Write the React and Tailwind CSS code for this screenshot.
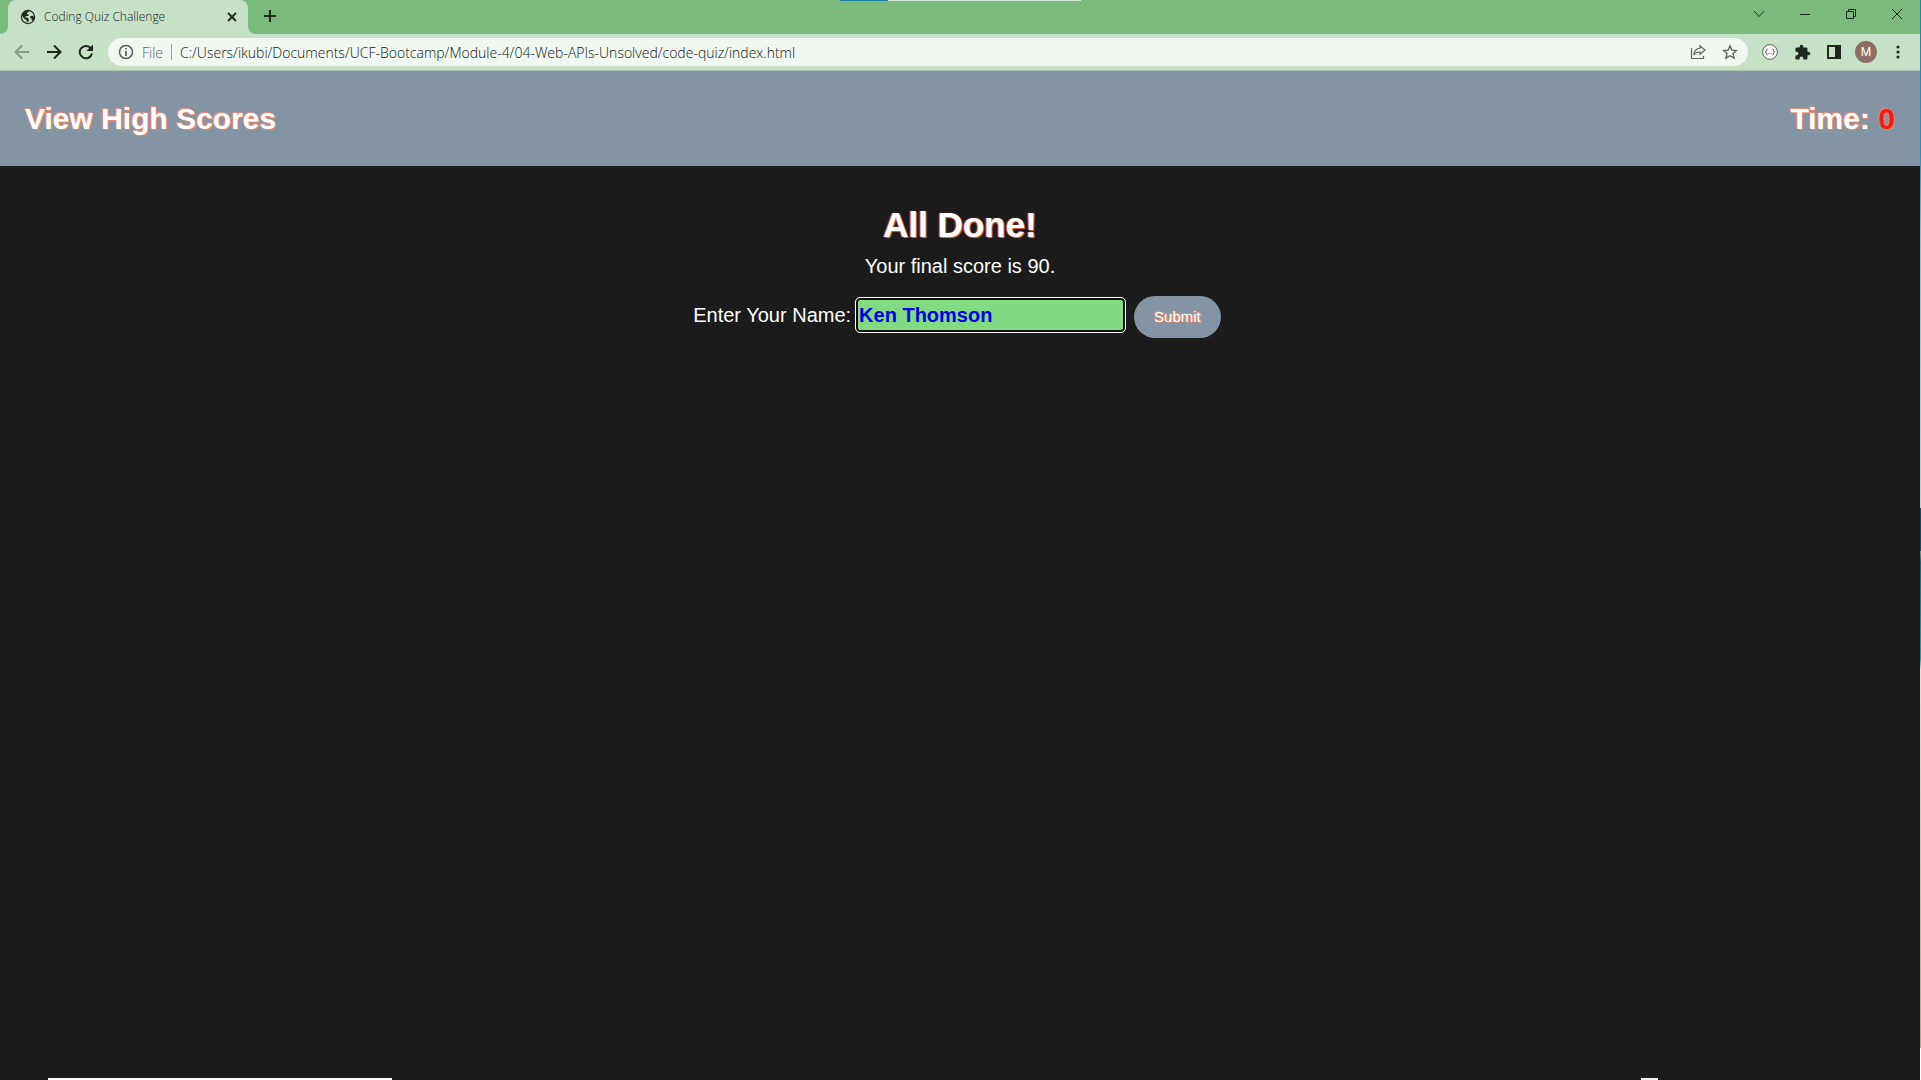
import React from "react";

const glow = "[text-shadow:-1px_-1px_1px_#f58a74,1px_1px_1px_#f08468]";
const heroGlow = "[text-shadow:-1px_0_1px_#f07058,1px_1px_1px_#e86a48]";

function Globe() {
  return (
    <svg viewBox="0 0 16 16" className="size-4 shrink-0" aria-hidden="true">
      <circle cx="8" cy="8" r="7.2" fill="#202a22" />
      <path d="M9.3 2.2 7 3.9l.2 1.3 1.5.6-.2 1.3H6.2L5 8.2l2.5.6 1.600 1.500-.6 1.600-1.700 1.900-.3-2.800L4 9.400 2 6.800 2.100 9.600C2.900 12 5 14 8 14c2 0 3.600-1 4.700-2.500l-1-.5-.3-1.800-1.500-.5.6-1.500 2-.6L14 8c0-2.800-2-5.200-4.700-5.800z" fill="#c5e1c6" />
    </svg>
  );
}

function IconButton({ label, className = "", children }) {
  return (
    <button type="button" aria-label={label} className={`flex size-8 shrink-0 items-center justify-center ${className}`}>
      {children}
    </button>
  );
}

function TabStrip() {
  return (
    <div className="relative flex h-[34px] shrink-0 bg-[#7abb7d] pl-2">
      <div className="absolute left-[840px] top-0 flex h-px w-[241px] bg-[#d4ecd5]">
        <div className="w-12 bg-[#2080a0]" />
      </div>
      <div className="relative flex w-60 items-center rounded-t-lg bg-[#c5e1c6] pl-3 pr-2">
        <svg viewBox="0 0 8 8" className="absolute -left-2 bottom-0 size-2" aria-hidden="true">
          <path d="M8 0v8H0a8 8 0 0 0 8-8z" fill="#c5e1c6" />
        </svg>
        <svg viewBox="0 0 8 8" className="absolute -right-2 bottom-0 size-2" aria-hidden="true">
          <path d="M0 0v8h8a8 8 0 0 1-8-8z" fill="#c5e1c6" />
        </svg>
        <Globe />
        <span className="ml-2 flex-1 whitespace-nowrap font-['Open_Sans','Noto_Sans',sans-serif] text-[12px] font-light text-[#1c241d]">Coding Quiz Challenge</span>
        <button type="button" aria-label="Close tab" className="flex size-4 items-center justify-center">
          <svg viewBox="0 0 16 16" className="size-4" fill="none" stroke="#202a22" strokeWidth="1.8" aria-hidden="true">
            <path d="M4 4l8 8M12 4l-8 8" />
          </svg>
        </button>
      </div>
      <IconButton label="New tab" className="ml-1.5">
        <svg viewBox="0 0 16 16" className="size-4" fill="none" stroke="#1c2a1e" strokeWidth="2" aria-hidden="true">
          <path d="M8 2v12M2 8h12" />
        </svg>
      </IconButton>
      <div className="ml-auto flex">
        <button type="button" aria-label="Search tabs" className="flex h-7 w-[46px] items-center justify-center">
          <svg viewBox="0 0 12 12" className="size-3" fill="none" stroke="#1c2a1e" aria-hidden="true"><path d="M1 3l5 5.500L11 3" /></svg>
        </button>
        <button type="button" aria-label="Minimize" className="flex h-7 w-[46px] items-center justify-center">
          <svg viewBox="0 0 10 10" className="size-2.5" stroke="#1c2a1e" aria-hidden="true"><path d="M0 5.500h10" /></svg>
        </button>
        <button type="button" aria-label="Restore" className="flex h-7 w-[46px] items-center justify-center">
          <svg viewBox="0 0 10 10" className="size-2.5" fill="none" stroke="#1c2a1e" aria-hidden="true"><path d="M.5 2.500h7v7h-7zM2.500 2.500v-2h7v7h-2" /></svg>
        </button>
        <button type="button" aria-label="Close window" className="flex h-7 w-[46px] items-center justify-center">
          <svg viewBox="0 0 10 10" className="size-2.5" fill="none" stroke="#1c2a1e" aria-hidden="true"><path d="M0 0l10 10M10 0L0 10" /></svg>
        </button>
      </div>
    </div>
  );
}

function Toolbar() {
  return (
    <div className="flex h-[37px] shrink-0 items-center border-b border-[#a9c3b0] bg-[#c5e1c6] pl-1.5 pr-1.5">
      <IconButton label="Back">
        <svg viewBox="0 0 16 16" className="size-4" fill="none" stroke="#829a86" strokeWidth="2" aria-hidden="true"><path d="M15 8H2M8 1.500L1.500 8 8 14.500" /></svg>
      </IconButton>
      <IconButton label="Forward">
        <svg viewBox="0 0 16 16" className="size-4" fill="none" stroke="#1d261f" strokeWidth="2" aria-hidden="true"><path d="M1 8h13M8 1.500L14.500 8 8 14.500" /></svg>
      </IconButton>
      <IconButton label="Reload">
        <svg viewBox="0 0 16 16" className="size-4" aria-hidden="true">
          <path d="M13 4.500A6.200 6.200 0 1 0 14 9.500" fill="none" stroke="#1d261f" strokeWidth="2" />
          <path d="M15 .5v6.500H8.500z" fill="#1d261f" />
        </svg>
      </IconButton>
      <div className="ml-1.5 flex h-7 flex-1 items-center rounded-full bg-[#f1f8f2] pl-2.5 pr-0.5 font-['Open_Sans','Noto_Sans',sans-serif] text-[14px] font-light">
        <svg viewBox="0 0 16 16" className="size-4 shrink-0" fill="none" stroke="#59625b" strokeWidth="1.500" aria-hidden="true">
          <circle cx="8" cy="8" r="6.500" />
          <path d="M8 7v5M8 4v1.600" strokeWidth="1.800" />
        </svg>
        <span className="ml-2 text-[#59625b]">File</span>
        <span className="ml-2 mr-2 h-4 w-px bg-[#98a29a]" />
        <input aria-label="Address" readOnly value="C:/Users/ikubi/Documents/UCF-Bootcamp/Module-4/04-Web-APIs-Unsolved/code-quiz/index.html" className="min-w-0 flex-1 bg-transparent text-[#101511] outline-none" />
        <IconButton label="Share">
          <svg viewBox="0 0 16 16" className="size-4" fill="none" stroke="#59625b" strokeWidth="1.200" aria-hidden="true">
            <path d="M1.500 4v10.500h12V12" />
            <path d="M10 1.800L15 6l-5 4.200V8C7 8 5.200 8.800 3.800 11 4.200 7 6.500 4.600 10 4.200z" />
          </svg>
        </IconButton>
        <IconButton label="Bookmark this page">
          <svg viewBox="0 0 16 16" className="size-4" fill="none" stroke="#59625b" strokeWidth="1.400" aria-hidden="true"><path d="M8 1.800l1.800 4.300 4.700.4-3.500 3.100 1 4.500-4-2.400-4 2.400 1-4.500-3.500-3.100 4.700-.4z" /></svg>
        </IconButton>
      </div>
      <IconButton label="JSON viewer extension" className="ml-1.5">
        <svg viewBox="0 0 16 16" className="size-4" fill="none" stroke="#5c615d" aria-hidden="true">
          <circle cx="8" cy="8" r="7.400" fill="#fafafa" />
          <path d="M5.500 5C4 5 5 8 3.500 8 5 8 4 11 5.500 11M10.500 5c1.500 0 .5 3 2 3-1.500 0-.5 3-2 3" stroke="#3c403d" />
          <path d="M6.500 9.500h1M8.500 9.500h1" />
        </svg>
      </IconButton>
      <IconButton label="Extensions">
        <svg viewBox="0 0 24 24" className="size-[17px]" fill="#1d261f" aria-hidden="true"><path d="M20.500 11H19V7c0-1.100-.9-2-2-2h-4V3.500a2.500 2.500 0 0 0-5 0V5H4c-1.100 0-2 .9-2 2v3.800h1.500a2.700 2.700 0 0 1 0 5.400H2V20c0 1.100.9 2 2 2h3.800v-1.500a2.700 2.700 0 0 1 5.400 0V22H17c1.100 0 2-.9 2-2v-4h1.500a2.500 2.500 0 0 0 0-5z" /></svg>
      </IconButton>
      <IconButton label="Side panel">
        <svg viewBox="0 0 16 16" className="size-4" aria-hidden="true"><path d="M2 2h8v12H2z" fill="none" stroke="#1d261f" strokeWidth="2" /><path d="M9 1h6v14H9z" fill="#1d261f" /></svg>
      </IconButton>
      <IconButton label="Profile">
        <span className="flex size-[22px] items-center justify-center rounded-full bg-[#8d6e63] font-[Roboto,sans-serif] text-[12px] text-white">M</span>
      </IconButton>
      <IconButton label="Menu">
        <svg viewBox="0 0 16 16" className="size-4" fill="#1d261f" aria-hidden="true"><circle cx="8" cy="3" r="1.600" /><circle cx="8" cy="8" r="1.600" /><circle cx="8" cy="13" r="1.600" /></svg>
      </IconButton>
    </div>
  );
}

export default function App() {
  return (
    <div className="relative flex min-h-screen flex-col bg-[#1b1b1b] pr-px font-['Liberation_Sans',Arial,sans-serif] text-white">
      <TabStrip />
      <Toolbar />
      <header className="flex h-[95px] items-center justify-between bg-[#8395a4] px-[25px] text-[30px] font-bold">
        <a href="#scores" className={glow}>View High Scores</a>
        <p className={glow}>Time: <span className="text-[#ee1c12]">0</span></p>
      </header>
      <main className="flex flex-col items-center pt-9 text-[20px]">
        <h1 className={`text-[35px] font-bold leading-[46px] ${heroGlow}`}>All Done!</h1>
        <p className="mt-1 leading-7">Your final score is 90.</p>
        <form className="mt-4 flex items-baseline pr-1.5" onSubmit={(e) => e.preventDefault()}>
          <label htmlFor="name">Enter Your Name:</label>
          <input id="name" defaultValue="Ken Thomson" className="ml-1 h-9 w-[271px] rounded-[5px] border border-white bg-[#82db82] px-[3px] text-[20px] font-bold text-[#0000e0] shadow-[inset_0_0_0_2px_#101010] outline-none" />
          <button type="submit" className={`ml-2 h-[42px] rounded-full bg-[#8395a4] px-5 text-[15px] ${glow}`}>Submit</button>
        </form>
      </main>
      <div className="absolute bottom-0 left-12 h-0.5 w-[344px] bg-white" />
      <div className="absolute bottom-0 right-[263px] h-0.5 w-[17px] bg-[#f2f2f2]" />
      <div className="absolute inset-y-0 right-0 w-px bg-[linear-gradient(#1488b8_0%,#1f92c0_14%,#8cc4d8_22%,#b8d4d8_47%,#0c4c6c_47%,#0c4c6c_51%,#70a080_51%,#0c6c84_52%,#20a0ac_61%,#e8e0d8_62%,#b8a890_97%,#ffffff_97%)]" />
    </div>
  );
}
